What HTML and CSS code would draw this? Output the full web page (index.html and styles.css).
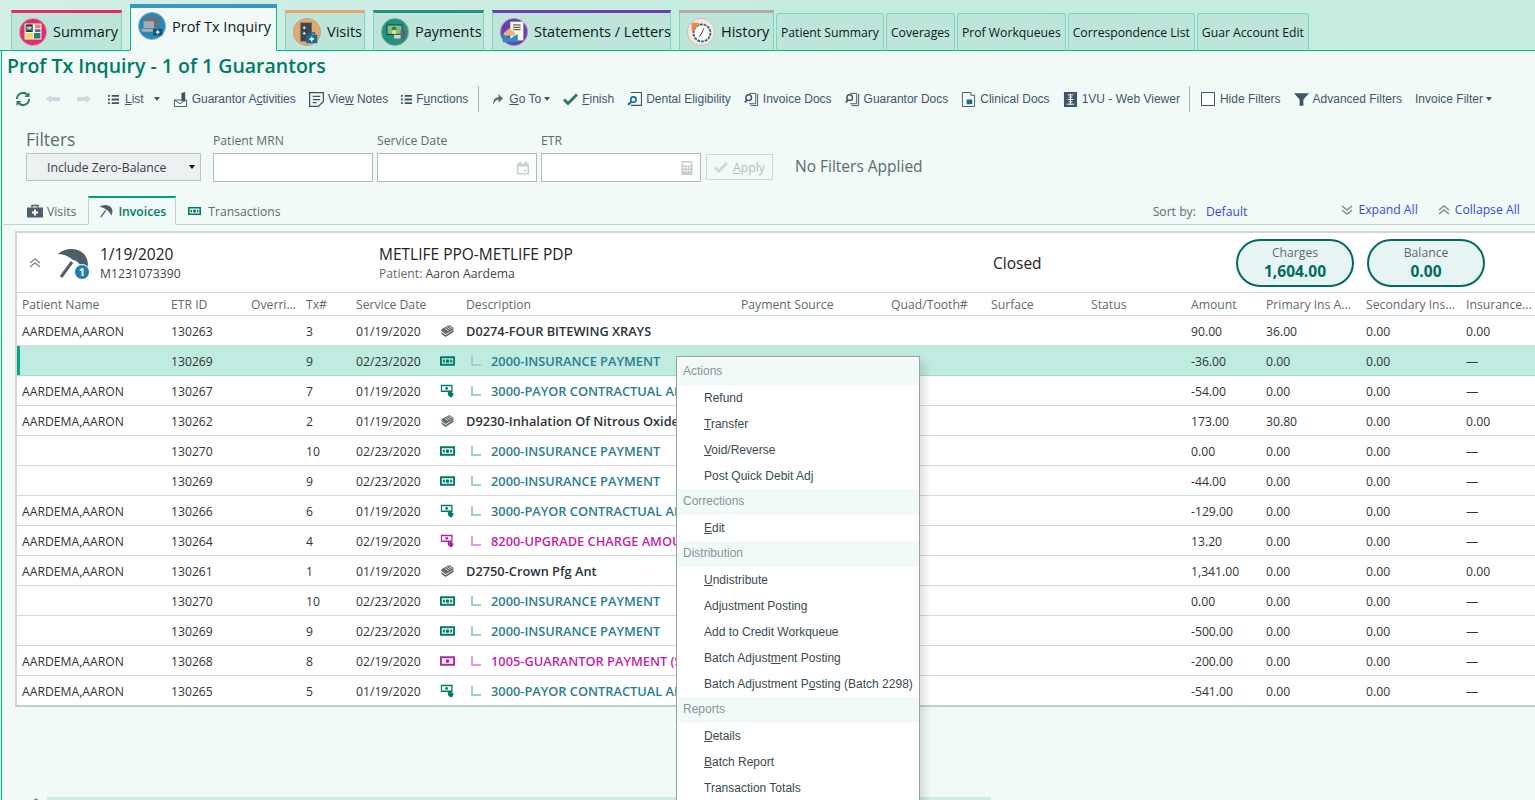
FILE: index.html
```html
<!DOCTYPE html>
<html lang="en">
<head>
    <meta charset="UTF-8">
    <title>Prof Tx Inquiry</title>
    <link rel="stylesheet" href="styles.css">
</head>
<body>
<svg class="defs" width="0" height="0">
    <symbol id="i-money" viewBox="0 0 16 12">
        <path fill="#007a68" fill-rule="evenodd" d="M0 1h16v10H0zM2 3v6h12V3z"/>
        <circle cx="8" cy="6" r="2" fill="#007a68"/>
        <path fill="#007a68" d="M3 5l2-1v4L3 7zM13 5l-2-1v4l2-1z"/>
    </symbol>
    <symbol id="i-adjust" viewBox="0 0 16 16">
        <path fill="none" stroke="#007a68" stroke-width="1.5" d="M1 1.700h12v6.600H1z"/>
        <circle cx="7" cy="5" r="1.600" fill="#007a68"/>
        <path fill="#007a68" d="M8 10l3-2 4 3-1 3-2 1.500-3-2z"/>
    </symbol>
    <symbol id="i-adjust-pink" viewBox="0 0 16 16">
        <path fill="none" stroke="#b5269c" stroke-width="1.5" d="M1 1.700h12v6.600H1z"/>
        <circle cx="7" cy="5" r="1.600" fill="#b5269c"/>
        <path fill="#b5269c" d="M8 10l3-2 4 3-1 3-2 1.500-3-2z"/>
    </symbol>
    <symbol id="i-money-pink" viewBox="0 0 16 12">
        <path fill="#b5269c" fill-rule="evenodd" d="M0 1h16v10H0zM2 3v6h12V3z"/>
        <circle cx="8" cy="6" r="2" fill="#b5269c"/>
    </symbol>
    <symbol id="i-stack" viewBox="0 0 14 14">
        <path fill="#5f6b70" d="M1 5l8-4 4 3v2L5 10 1 7z"/>
        <path fill="#5f6b70" d="M1 8l4 3 8-5v2l-8 5-4-3z"/>
        <path stroke="#fff" stroke-width=".7" d="M4 4l4 3M6 3l4 3M8 2l4 3"/>
    </symbol>
    <symbol id="i-docs" viewBox="0 0 16 16">
        <path fill="none" stroke="#3d5566" d="M5.500 1.500h7v11h-7M7.500 13.500v1h7v-12h1"/>
        <circle cx="5" cy="6" r="3" fill="none" stroke="#3d5566" stroke-width="1.500"/>
        <path stroke="#3d5566" stroke-width="2" d="M3 8.500l-2 2.500"/>
    </symbol>
    <symbol id="i-list" viewBox="0 0 12 10">
        <path fill="#3d5566" d="M0 0h2v2H0zM4 0h8v2H4zM0 4h2v2H0zM4 4h8v2H4zM0 8h2v2H0zM4 8h8v2H4z"/>
    </symbol>
    <symbol id="i-up" viewBox="0 0 12 10">
        <path fill="none" stroke="#7d8f94" stroke-width="1.500" d="M1 5l5-4 5 4M1 9l5-4 5 4"/>
    </symbol>
    <symbol id="i-down" viewBox="0 0 12 10">
        <path fill="none" stroke="#7d8f94" stroke-width="1.500" d="M1 1l5 4 5-4M1 5l5 4 5-4"/>
    </symbol>
    <symbol id="i-umbrella" viewBox="0 0 32 32">
        <path fill="#4d5f68" d="M1 7C8 1 20 0 27 7c5 6 5 13 1 19-3-7-8-13-12-13-2-2-8-6-15-6z"/>
        <path stroke="#4d5f68" stroke-width="3" d="M15 15L4 30"/>
    </symbol>
</svg>

<div class="tabs">
    <div class="tab tab-big tab-summary">
        <svg class="tab-icon" viewBox="0 0 32 32"><circle cx="16" cy="16" r="14.500" fill="#e52a6f" stroke="#c9a5b5"/><path fill="#fff" d="M7 7h18v17H7z"/><path fill="#2e7f72" d="M8 8h8v8H8z"/><circle cx="12" cy="11" r="2.500" fill="#e9b98e"/><path fill="#1d3f3c" d="M9 8h6v2H9zM9 16c0-3 6-3 6 0z"/><path fill="#e58a4e" d="M18 8h6v4h-6z"/><path fill="#7a55b0" d="M18 13h6v3h-6z"/><path fill="#f3d95b" d="M8 17h8v6H8z"/><path fill="#2e7f72" d="M17 17h7v6h-7z"/></svg>
        Summary
    </div>
    <div class="tab tab-big tab-active">
        <svg class="tab-icon" viewBox="0 0 32 32"><circle cx="16" cy="16" r="14.500" fill="#2f86b4" stroke="#8fb8cc"/><path fill="#6b6f73" d="M9 7h14v10H9z"/><path fill="#a6adb0" d="M7 11h11v7H7zM5 19h16v3H5z"/><path fill="#164f78" d="M17 19h10v7H17z"/><path stroke="#fff" stroke-width="1.500" d="M22 20.500v4M20 22.500h4"/></svg>
        Prof Tx Inquiry
    </div>
    <div class="tab tab-big tab-visits">
        <svg class="tab-icon" viewBox="0 0 32 32"><circle cx="16" cy="16" r="14.500" fill="#deaa6e" stroke="#c9a078"/><path fill="#3e4650" d="M9 6h12v20H9z"/><path stroke="#fff" d="M13 10v3M11.500 11.500h3M13 16v3M11.500 17.500h3"/><path fill="#1a6b96" d="M15 19h12v9H15z"/><path fill="none" stroke="#1a6b96" stroke-width="1.500" d="M18 19v-2h6v2"/><path stroke="#fff" stroke-width="1.500" d="M21 21v5M18.500 23.500h5"/></svg>
        Visits
    </div>
    <div class="tab tab-big tab-payments">
        <svg class="tab-icon" viewBox="0 0 32 32"><circle cx="16" cy="16" r="14.500" fill="#26907e" stroke="#7cb5a8"/><path fill="#143f3a" d="M7 8h17v11H7z"/><path fill="#7cc18a" d="M8 9h15v9H8z"/><circle cx="15" cy="13" r="2.500" fill="#2e7f56"/><path fill="#567" d="M22 14h5v9h-5z"/><circle cx="15" cy="16" r="2.500" fill="#f3e25b"/><path fill="#c9d2cd" d="M15 19h7v4h-7z"/></svg>
        Payments
    </div>
    <div class="tab tab-big tab-statements">
        <svg class="tab-icon" viewBox="0 0 32 32"><circle cx="16" cy="16" r="14.500" fill="#6b3fb0" stroke="#a58fc5"/><path fill="#fbf7ea" d="M12 5h14v20H12z"/><path stroke="#333" d="M15 8.500h8M15 11h8M15 13.500h8"/><path fill="#e8b572" d="M5 17l6-5 6 5v3H5z"/><path fill="#2d8cc4" d="M4 18l8 5 8-5v9H4z"/></svg>
        Statements / Letters
    </div>
    <div class="tab tab-big tab-history">
        <svg class="tab-icon" viewBox="0 0 32 32"><circle cx="16" cy="16" r="14.500" fill="#f6e8da" stroke="#cbbfb2"/><circle cx="17" cy="17" r="9" fill="#fff" stroke="#1d6c94" stroke-width="2" stroke-dasharray="3 1"/><path fill="#e58a4e" d="M6 6h7l3 3c-4 0-6 2-7 6H6z"/><path stroke="#b22" d="M17 17l2-5"/><path stroke="#333" d="M17 17l-3 4"/></svg>
        History
    </div>
    <div class="tab tab-small">Patient Summary</div>
    <div class="tab tab-small">Coverages</div>
    <div class="tab tab-small">Prof Workqueues</div>
    <div class="tab tab-small">Correspondence List</div>
    <div class="tab tab-small">Guar Account Edit</div>
</div>

<div class="content">
    <h1 class="page-title">Prof Tx Inquiry - 1 of 1 Guarantors</h1>

    <div class="toolbar">
        <svg class="tool-icon refresh" viewBox="0 0 16 16"><path fill="none" stroke="#2e7d5c" stroke-width="2" d="M2 8a6 6 0 0 1 10.500-4M14 8a6 6 0 0 1-10.500 4"/><path fill="#2e7d5c" d="M14.500 1v5h-5zM1.500 15v-5h5z"/></svg>
        <svg class="tool-icon arrow" viewBox="0 0 14 10"><path fill="#c9dbe0" d="M0 5l5-4v2h9v4H5v2z"/></svg>
        <svg class="tool-icon arrow" viewBox="0 0 14 10"><path fill="#c9dbe0" d="M14 5L9 1v2H0v4h9v2z"/></svg>
        <span class="tool tool-list"><svg class="tool-icon small" viewBox="0 0 10 10"><use href="#i-list"/></svg><span><u>L</u>ist</span><i class="caret"></i></span>
        <span class="tool"><svg class="tool-icon" viewBox="0 0 14 16"><path fill="none" stroke="#3d5566" d="M.5 8.500h13v7H.5zM.5 8.500l6 4 3-2"/><path fill="#3d5566" d="M8 1l4-1v10H8z"/></svg><span>Guarantor A<u>c</u>tivities</span></span>
        <span class="tool"><svg class="tool-icon" viewBox="0 0 12 12"><path fill="none" stroke="#3d5566" d="M.5.500h11v7l-4 4h-7z"/><path stroke="#3d5566" d="M3 3.500h6M3 6h6M3 8.500h3"/></svg><span>Vie<u>w</u> Notes</span></span>
        <span class="tool"><svg class="tool-icon small" viewBox="0 0 10 10"><use href="#i-list"/></svg><span>F<u>u</u>nctions</span></span>
        <i class="tool-sep"></i>
        <span class="tool tool-goto"><svg class="tool-icon small" viewBox="0 0 10 10"><path fill="#5f6b70" d="M1 10c0-5 2-7 5-7V0l4 4-4 4V5C4 5 2 7 1 10z"/></svg><span><u>G</u>o To</span><i class="caret"></i></span>
        <span class="tool"><svg class="tool-icon" viewBox="0 0 15 12"><path fill="none" stroke="#2e7d5c" stroke-width="3" d="M1 6l4 4 9-9"/></svg><span><u>F</u>inish</span></span>
        <span class="tool"><svg class="tool-icon" viewBox="0 0 14 14"><path fill="none" stroke="#3d5566" d="M3.500.500h10v12h-10"/><circle cx="6" cy="7" r="2.500" fill="none" stroke="#1a6b96" stroke-width="1.500"/><path stroke="#1a6b96" stroke-width="2" d="M4 9l-3 3"/></svg><span>Dental Eligibility</span></span>
        <span class="tool"><svg class="tool-icon" viewBox="0 0 16 16"><use href="#i-docs"/></svg><span>Invoice Docs</span></span>
        <span class="tool"><svg class="tool-icon" viewBox="0 0 16 16"><use href="#i-docs"/></svg><span>Guarantor Docs</span></span>
        <span class="tool"><svg class="tool-icon" viewBox="0 0 14 16"><path fill="none" stroke="#3d5566" d="M.5.500h9v3h4v12h-13z"/><path fill="#1a6b96" d="M5 8h6v5H5z"/></svg><span>Clinical Docs</span></span>
        <span class="tool"><svg class="tool-icon" viewBox="0 0 14 16"><path fill="#3d5566" d="M0 0h14v16H0z"/><path stroke="#fff" d="M4 3h6M5 5.500h4M4 8h6M5 10.500h4M3 13h8M7 2v12"/></svg><span>1VU - Web Viewer</span></span>
        <i class="tool-sep sep-right"></i>
        <span class="tool"><i class="checkbox"></i><span>Hide Filters</span></span>
        <span class="tool"><svg class="tool-icon" viewBox="0 0 12 12"><path fill="#3d5566" d="M0 1h12L7.500 6v5h-3V6z"/></svg><span>Advanced Filters</span></span>
        <span class="tool"><span>Invoice Filter</span><i class="caret"></i></span>
    </div>

    <div class="filters">
        <div class="filter-group filter-main">
            <label class="filters-title">Filters</label>
            <div class="select">Include Zero-Balance<i class="caret caret-dark"></i></div>
        </div>
        <div class="filter-group">
            <label>Patient MRN</label>
            <div class="field"></div>
        </div>
        <div class="filter-group">
            <label>Service Date</label>
            <div class="field">
                <svg class="field-icon" viewBox="0 0 12 13"><path fill="#c8cfd0" d="M2 0h2v2h4V0h2v2h2v11H0V2h2zM1.500 5v6.500h9V5z"/><path fill="#c8cfd0" d="M7 8h2v2H7z"/></svg>
            </div>
        </div>
        <div class="filter-group">
            <label>ETR</label>
            <div class="field">
                <svg class="field-icon" viewBox="0 0 11 14"><path fill="#c8cfd0" d="M0 0h11v14H0z"/><path fill="#fff" d="M1.500 1.500h8v3h-8zM2 6h1.500v1.500H2zM4.700 6h1.500v1.500H4.700zM7.500 6H9v1.500H7.500zM2 9h1.500v1.500H2zM4.700 9h1.500v1.500H4.700zM7.500 9H9v1.500H7.500z"/></svg>
            </div>
        </div>
        <button class="apply"><svg viewBox="0 0 15 12" width="14" height="11"><path fill="none" stroke="#c9dcd4" stroke-width="3" d="M1 6l4 4 9-9"/></svg><span><u>A</u>pply</span></button>
        <div class="no-filters">No Filters Applied</div>
    </div>

    <div class="subtabs">
        <div class="subtab">
            <svg class="subtab-icon" viewBox="0 0 16 13"><path fill="#4d5f68" d="M0 3h16v10H0z"/><path fill="none" stroke="#4d5f68" stroke-width="1.500" d="M5 3V1h6v2"/><path stroke="#fff" stroke-width="2" d="M8 5v6M5 8h6"/></svg>
            Visits
        </div>
        <div class="subtab subtab-active">
            <svg class="subtab-icon" viewBox="0 0 32 32"><use href="#i-umbrella"/></svg>
            Invoices
        </div>
        <div class="subtab">
            <svg class="subtab-icon icon-money" viewBox="0 0 16 12"><use href="#i-money"/></svg>
            Transactions
        </div>
        <div class="sort">
            <span class="sort-label">Sort by:</span><a class="link sort-value">Default</a>
        </div>
        <a class="link expand"><svg class="chev" viewBox="0 0 12 10"><use href="#i-down"/></svg>Expand All</a>
        <a class="link collapse"><svg class="chev" viewBox="0 0 12 10"><use href="#i-up"/></svg>Collapse All</a>
    </div>

    <div class="panel">
        <div class="invoice-head">
            <svg class="chev head-chev" viewBox="0 0 12 10"><use href="#i-up"/></svg>
            <div class="umbrella">
                <svg viewBox="0 0 32 32" width="32" height="32"><use href="#i-umbrella"/></svg>
                <span class="umbrella-badge">1</span>
            </div>
            <div class="invoice-date">
                <div class="big">1/19/2020</div>
                <div class="sub">M1231073390</div>
            </div>
            <div class="invoice-payer">
                <div class="big">METLIFE PPO-METLIFE PDP</div>
                <div class="sub"><span class="muted">Patient:</span> Aaron Aardema</div>
            </div>
            <div class="invoice-status">Closed</div>
            <div class="pill pill-charges"><span>Charges</span><b>1,604.00</b></div>
            <div class="pill"><span>Balance</span><b>0.00</b></div>
        </div>

        <table class="grid">
            <colgroup>
                <col class="c-name"><col class="c-etr"><col class="c-over"><col class="c-tx"><col class="c-date"><col class="c-icon"><col class="c-desc">
                <col class="c-150"><col class="c-100"><col class="c-100"><col class="c-100">
                <col class="c-amt"><col class="c-100"><col class="c-100"><col class="c-ins">
            </colgroup>
            <thead>
                <tr><th>Patient Name</th><th>ETR ID</th><th>Overri...</th><th>Tx#</th><th colspan="2">Service Date</th><th>Description</th><th>Payment Source</th><th>Quad/Tooth#</th><th>Surface</th><th>Status</th><th>Amount</th><th>Primary Ins A...</th><th>Secondary Ins...</th><th>Insurance...</th></tr>
            </thead>
            <tbody>
                <tr><td>AARDEMA,AARON</td><td>130263</td><td></td><td>3</td><td>01/19/2020</td><td><svg class="row-icon" viewBox="0 0 14 14"><use href="#i-stack"/></svg></td><td class="d-charge">D0274-FOUR BITEWING XRAYS</td><td colspan="4"></td><td>90.00</td><td>36.00</td><td>0.00</td><td>0.00</td></tr>
                <tr class="selected"><td></td><td>130269</td><td></td><td>9</td><td>02/23/2020</td><td><svg class="row-icon" viewBox="0 0 16 12"><use href="#i-money"/></svg></td><td class="d-pay"><i class="elbow"></i>2000-INSURANCE PAYMENT</td><td colspan="4">Metlife</td><td>-36.00</td><td>0.00</td><td>0.00</td><td>—</td></tr>
                <tr><td>AARDEMA,AARON</td><td>130267</td><td></td><td>7</td><td>01/19/2020</td><td><svg class="row-icon" viewBox="0 0 16 16"><use href="#i-adjust"/></svg></td><td class="d-pay"><i class="elbow"></i>3000-PAYOR CONTRACTUAL ALLOWANCE</td><td colspan="4"></td><td>-54.00</td><td>0.00</td><td>0.00</td><td>—</td></tr>
                <tr><td>AARDEMA,AARON</td><td>130262</td><td></td><td>2</td><td>01/19/2020</td><td><svg class="row-icon" viewBox="0 0 14 14"><use href="#i-stack"/></svg></td><td class="d-charge">D9230-Inhalation Of Nitrous Oxide</td><td colspan="4"></td><td>173.00</td><td>30.80</td><td>0.00</td><td>0.00</td></tr>
                <tr><td></td><td>130270</td><td></td><td>10</td><td>02/23/2020</td><td><svg class="row-icon" viewBox="0 0 16 12"><use href="#i-money"/></svg></td><td class="d-pay"><i class="elbow"></i>2000-INSURANCE PAYMENT</td><td colspan="4"></td><td>0.00</td><td>0.00</td><td>0.00</td><td>—</td></tr>
                <tr><td></td><td>130269</td><td></td><td>9</td><td>02/23/2020</td><td><svg class="row-icon" viewBox="0 0 16 12"><use href="#i-money"/></svg></td><td class="d-pay"><i class="elbow"></i>2000-INSURANCE PAYMENT</td><td colspan="4"></td><td>-44.00</td><td>0.00</td><td>0.00</td><td>—</td></tr>
                <tr><td>AARDEMA,AARON</td><td>130266</td><td></td><td>6</td><td>01/19/2020</td><td><svg class="row-icon" viewBox="0 0 16 16"><use href="#i-adjust"/></svg></td><td class="d-pay"><i class="elbow"></i>3000-PAYOR CONTRACTUAL ALLOWANCE</td><td colspan="4"></td><td>-129.00</td><td>0.00</td><td>0.00</td><td>—</td></tr>
                <tr><td>AARDEMA,AARON</td><td>130264</td><td></td><td>4</td><td>02/19/2020</td><td><svg class="row-icon" viewBox="0 0 16 16"><use href="#i-adjust-pink"/></svg></td><td class="d-pink"><i class="elbow"></i>8200-UPGRADE CHARGE AMOUNT</td><td colspan="4"></td><td>13.20</td><td>0.00</td><td>0.00</td><td>—</td></tr>
                <tr><td>AARDEMA,AARON</td><td>130261</td><td></td><td>1</td><td>01/19/2020</td><td><svg class="row-icon" viewBox="0 0 14 14"><use href="#i-stack"/></svg></td><td class="d-charge">D2750-Crown Pfg Ant</td><td colspan="4"></td><td>1,341.00</td><td>0.00</td><td>0.00</td><td>0.00</td></tr>
                <tr><td></td><td>130270</td><td></td><td>10</td><td>02/23/2020</td><td><svg class="row-icon" viewBox="0 0 16 12"><use href="#i-money"/></svg></td><td class="d-pay"><i class="elbow"></i>2000-INSURANCE PAYMENT</td><td colspan="4"></td><td>0.00</td><td>0.00</td><td>0.00</td><td>—</td></tr>
                <tr><td></td><td>130269</td><td></td><td>9</td><td>02/23/2020</td><td><svg class="row-icon" viewBox="0 0 16 12"><use href="#i-money"/></svg></td><td class="d-pay"><i class="elbow"></i>2000-INSURANCE PAYMENT</td><td colspan="4"></td><td>-500.00</td><td>0.00</td><td>0.00</td><td>—</td></tr>
                <tr><td>AARDEMA,AARON</td><td>130268</td><td></td><td>8</td><td>02/19/2020</td><td><svg class="row-icon" viewBox="0 0 16 12"><use href="#i-money-pink"/></svg></td><td class="d-pink"><i class="elbow"></i>1005-GUARANTOR PAYMENT (SELF)</td><td colspan="4"></td><td>-200.00</td><td>0.00</td><td>0.00</td><td>—</td></tr>
                <tr><td>AARDEMA,AARON</td><td>130265</td><td></td><td>5</td><td>01/19/2020</td><td><svg class="row-icon" viewBox="0 0 16 16"><use href="#i-adjust"/></svg></td><td class="d-pay"><i class="elbow"></i>3000-PAYOR CONTRACTUAL ALLOWANCE</td><td colspan="4"></td><td>-541.00</td><td>0.00</td><td>0.00</td><td>—</td></tr>
            </tbody>
        </table>
    </div>

    <div class="next-strip">
        <svg class="strip-chev" viewBox="0 0 12 10"><use href="#i-up"/></svg>
        <div class="strip-bar"></div>
    </div>
</div>

<!-- context menu for the selected row -->
<div class="menu">
    <div class="menu-head">Actions</div>
    <div class="menu-item">Refund</div>
    <div class="menu-item"><u>T</u>ransfer</div>
    <div class="menu-item"><u>V</u>oid/Reverse</div>
    <div class="menu-item">Post Quick Debit Adj</div>
    <div class="menu-head">Corrections</div>
    <div class="menu-item"><u>E</u>dit</div>
    <div class="menu-head">Distribution</div>
    <div class="menu-item"><u>U</u>ndistribute</div>
    <div class="menu-item">Adjustment Posting</div>
    <div class="menu-item">Add to Credit Workqueue</div>
    <div class="menu-item">Batch Adjust<u>m</u>ent Posting</div>
    <div class="menu-item">Batch Adjustment P<u>o</u>sting (Batch 2298)</div>
    <div class="menu-head">Reports</div>
    <div class="menu-item"><u>D</u>etails</div>
    <div class="menu-item"><u>B</u>atch Report</div>
    <div class="menu-item">Transaction Totals</div>
</div>
</body>
</html>
```

FILE: styles.css
```css
* {
    box-sizing: border-box;
}

html, body {
    margin: 0;
    padding: 0;
    height: 800px;
    overflow: hidden;
}

body {
    position: relative;
    font-family: "Open Sans", "Noto Sans", sans-serif;
    font-size: 12px;
    color: #333;
    background: linear-gradient(100deg, #d3efe6 0%, #c4ebdf 50%, #c8ece1 100%);
}

.defs {
    position: absolute;
}

/* Top tabs */
.tabs {
    display: flex;
    align-items: flex-end;
    height: 51px;
    padding-left: 11px;
    border-bottom: 1px solid #00b88f;
}

.tab {
    display: flex;
    align-items: center;
    height: 41px;
    margin-right: 8px;
    margin-bottom: -1px;
    color: #101820;
    background: #bde5da;
    border: 1px solid #7fd6bd;
    border-bottom: 1px solid #00b88f;
    white-space: nowrap;
}

.tab-big {
    padding: 0 4px 0 6px;
    gap: 5px;
    font-size: 14.500px;
    border-top: 3px solid #999;
}

.tab-icon {
    width: 30px;
    height: 30px;
    flex: none;
}

.tab-summary { width: 111px; border-top-color: #e52a6f; }
.tab-visits { width: 80px; border-top-color: #deaa6e; }
.tab-payments { width: 111px; border-top-color: #26907e; }
.tab-statements { width: 179px; border-top-color: #6b3fb0; }
.tab-history { width: 95px; margin-right: 2px; border-top-color: #b0aca6; }

.tab-active {
    width: 147px;
    height: 47px;
    padding-bottom: 6px;
    background: #f1faf7;
    border-color: #00b88f;
    border-top: 4px solid #3798c6;
    border-bottom-color: #f1faf7;
}

.tab-small {
    height: 38px;
    margin-right: 2px;
    padding: 0 4px;
    font-size: 12.200px;
    border-radius: 3px 3px 0 0;
}

/* Main area */
.content {
    margin-left: 1px;
    height: 749px;
    background: #f1faf7;
    border-left: 1px solid #00b88f;
    overflow: hidden;
}

.page-title {
    margin: 0;
    padding: 3px 0 0 5px;
    height: 34px;
    font-size: 19.500px;
    font-weight: 600;
    line-height: 24px;
    color: #007a68;
}

.toolbar {
    display: flex;
    align-items: center;
    height: 28px;
    padding-left: 13px;
    font-family: "Liberation Sans", Arial, sans-serif;
    font-size: 12px;
    color: #44566a;
    white-space: nowrap;
}

.tool {
    display: flex;
    align-items: center;
    gap: 4px;
    margin-right: 13px;
}

.tool-icon {
    width: 15px;
    height: 15px;
    flex: none;
}

.tool-icon.small {
    width: 11px;
    height: 11px;
}

.refresh {
    width: 16px;
    height: 16px;
    margin-right: 15px;
}

.arrow {
    width: 14px;
    height: 10px;
    margin-right: 17px;
}

.tool-list span { margin-left: 2px; }

.tool-list .caret { margin-left: 6px; }

.tool-goto span { margin-left: 2px; }

.tool-sep {
    width: 1px;
    height: 26px;
    margin-right: 13px;
    margin-left: -3px;
    background: #a8b3b3;
}

.sep-right {
    margin-left: -4px;
    margin-right: 11px;
}

.caret {
    display: inline-block;
    width: 0;
    height: 0;
    margin-left: -1px;
    border-left: 3.500px solid transparent;
    border-right: 3.500px solid transparent;
    border-top: 4px solid #44566a;
}

.checkbox {
    display: block;
    width: 14px;
    height: 14px;
    background: #fff;
    border: 1px solid #44566a;
    margin-right: 1px;
}

/* Filters */
.filters {
    display: flex;
    align-items: flex-start;
    height: 83px;
    padding: 18px 0 0 24px;
    color: #5d6b70;
}

.filter-group {
    width: 160px;
    margin-right: 4px;
}

.filter-group label {
    display: block;
    height: 22px;
    font-size: 12.200px;
    line-height: 19px;
}

.filter-main {
    width: 175px;
    margin-right: 12px;
}

.filters-title {
    font-size: 17.500px !important;
    margin-top: -1px;
    height: 23px !important;
}

.select {
    display: flex;
    align-items: center;
    justify-content: space-between;
    height: 28px;
    padding: 0 5px 0 20px;
    font-size: 12.200px;
    color: #333f44;
    background: #edf1f2;
    border: 1px solid #bbc4c4;
}

.caret-dark { border-top-color: #111; }

.field {
    display: flex;
    align-items: center;
    justify-content: flex-end;
    height: 29px;
    padding-right: 7px;
    background: #fff;
    border: 1px solid #b4b9b9;
}

.field-icon {
    width: 12px;
    height: 14px;
}

.apply {
    display: flex;
    align-items: center;
    gap: 5px;
    width: 67px;
    height: 26px;
    margin: 23px 0 0 1px;
    padding: 0 0 0 7px;
    font-family: inherit;
    font-size: 12.200px;
    color: #b3bcbc;
    background: transparent;
    border: 1px solid #cfd4d4;
}

.no-filters {
    margin: 25px 0 0 22px;
    font-size: 15.500px;
    line-height: 21px;
    color: #5d6b70;
}

/* Invoices / visits tabs */
.subtabs {
    display: flex;
    align-items: stretch;
    height: 29px;
    padding-left: 12px;
    margin-left: 1px;
    margin-right: 0;
    border-bottom: 1px solid #c9d1d0;
    color: #5d6b70;
    font-size: 12.200px;
}

.subtab {
    display: flex;
    align-items: center;
    gap: 4px;
    padding: 2px 12px 0;
}

.subtab:first-child { padding-right: 12px; }

.subtab-icon {
    width: 16px;
    height: 14px;
}

.icon-money {
    width: 13px;
    margin-right: 3px;
}

.subtab-active {
    margin-bottom: -1px;
    color: #007a68;
    font-weight: 600;
    background: #f1faf7;
    border: 1px solid #c9d1d0;
    border-top: 2px solid #00a07f;
    border-bottom-color: #f1faf7;
    padding: 0 9px;
}

.sort {
    display: flex;
    align-items: center;
    margin-left: 860px;
    padding-top: 2px;
}

.sort-value { margin-left: 10px; }

.link {
    display: flex;
    align-items: center;
    color: #3a48e0;
}

.expand {
    margin-left: 94px;
    padding-bottom: 1px;
}

.collapse {
    margin-left: 20px;
    padding-bottom: 1px;
}

.chev {
    width: 12px;
    height: 10px;
    margin-right: 5px;
}

/* Invoice panel */
.panel {
    margin: 6px 0 0 13px;
    width: 1520px;
    height: 476px;
    background: #fff;
    border-top: 2px solid #d2d6d6;
    border-left: 2px solid #d2d6d6;
    border-bottom: 2px solid #c9cccc;
}

.invoice-head {
    display: flex;
    align-items: center;
    height: 59px;
    padding-left: 12px;
}

.head-chev {
    flex: none;
    margin: 0 16px 0 0;
}

.umbrella {
    position: relative;
    width: 32px;
    height: 32px;
    margin-right: 11px;
}

.umbrella-badge {
    position: absolute;
    right: -1px;
    bottom: -1px;
    width: 16px;
    height: 16px;
    font-size: 11px;
    font-weight: 700;
    line-height: 14px;
    text-align: center;
    color: #fff;
    background: #1f7faa;
    border: 1px solid #fff;
    border-radius: 50%;
}

.big {
    font-size: 15.500px;
    line-height: 22px;
    color: #222;
}

.sub {
    font-size: 12.200px;
    line-height: 17px;
    color: #444;
}

.muted { color: #667; }

.invoice-date { width: 279px; }

.invoice-payer { width: 614px; }

.invoice-status {
    width: 243px;
    font-size: 15.500px;
    color: #222;
}

.pill {
    display: flex;
    flex-direction: column;
    align-items: center;
    justify-content: center;
    width: 118px;
    height: 48px;
    color: #5d6b70;
    background: #e6f5f3;
    border: 2px solid #006b5f;
    border-radius: 24px;
    font-size: 12.200px;
    line-height: 16px;
}

.pill-charges { margin-right: 13px; }

.pill b {
    font-size: 15.500px;
    font-weight: 700;
    line-height: 20px;
    color: #006b5f;
}

/* Transactions grid */
.grid {
    width: 1518px;
    table-layout: fixed;
    border-collapse: collapse;
    font-size: 12.200px;
}

.c-name { width: 149px; }
.c-etr { width: 80px; }
.c-over { width: 55px; }
.c-tx { width: 50px; }
.c-date { width: 84px; }
.c-icon { width: 26px; }
.c-desc { width: 275px; }
.c-150 { width: 150px; }
.c-100 { width: 100px; }
.c-amt { width: 75px; }
.c-ins { width: 74px; }

.grid th {
    height: 23px;
    padding: 0 0 0 5px;
    font-weight: 400;
    text-align: left;
    color: #5d6b70;
    border-top: 1px solid #d5d9d9;
    border-bottom: 1px solid #d5d9d9;
    white-space: nowrap;
}

.grid td {
    height: 30px;
    padding: 1px 0 0 5px;
    color: #333;
    border-bottom: 1px solid #d5d9d9;
    white-space: nowrap;
}

.grid tr:last-child td { border-bottom: 0; }

.grid .selected td {
    background: #bfebe0;
    border-bottom-color: #a9d8cc;
}

.grid .selected td:first-child {
    box-shadow: inset 3px 0 0 #00a884;
}

.row-icon {
    display: block;
    width: 15px;
    height: 14px;
}

.grid .d-charge,
.grid .d-pay,
.grid .d-pink {
    font-size: 12.800px;
    font-weight: 600;
}

.grid .d-charge { color: #2b3338; }

.grid .d-pay { color: #2b7d90; padding-left: 5px; }

.grid .d-pink { color: #c41fa8; padding-left: 5px; }

.elbow {
    display: inline-block;
    width: 10px;
    height: 10px;
    margin: 0 10px 4px 5px;
    vertical-align: middle;
    border-left: 2px solid #a3cfc9;
    border-bottom: 2px solid #a3cfc9;
}

.d-pink .elbow {
    border-color: #e39cd9;
}

/* Strip of the next panel, cut off by the window */
.next-strip {
    display: flex;
    align-items: flex-start;
    margin-top: 90px;
    padding-left: 29px;
}

.strip-chev {
    width: 10px;
    height: 8px;
    margin: 1px 6px 0 0;
}

.strip-bar {
    width: 944px;
    height: 10px;
    background: #cdeee3;
}

/* Context menu */
.menu {
    position: absolute;
    top: 356px;
    left: 676px;
    width: 244px;
    height: 460px;
    padding-top: 2px;
    font-family: "Liberation Sans", Arial, sans-serif;
    font-size: 12px;
    color: #3a4a50;
    background: #fff;
    border: 1px solid #9aa3a3;
    box-shadow: 5px 5px 8px rgba(0, 0, 0, 0.12);
    white-space: nowrap;
}

.menu-head {
    height: 26px;
    padding-left: 6px;
    line-height: 24px;
    color: #86959c;
    background: #f1faf7;
}

.menu-item {
    height: 26px;
    padding-left: 27px;
    line-height: 26px;
}
```
